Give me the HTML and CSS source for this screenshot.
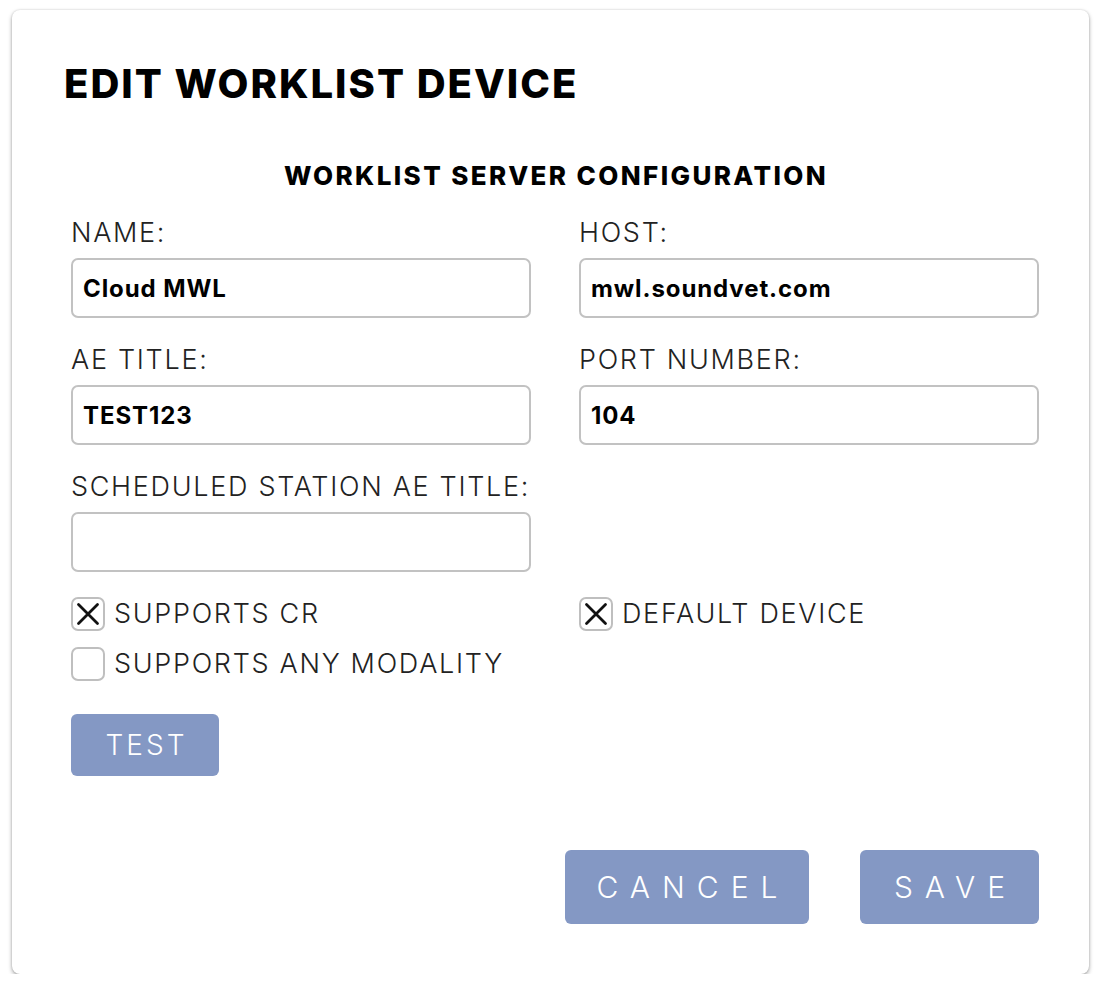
FILE: index.html
```html
<!DOCTYPE html>
<html lang="en">
<head>
<meta charset="utf-8">
<title>Edit Worklist Device</title>
<link rel="stylesheet" href="styles.css">
</head>
<body>
<div class="card">
  <h1 class="title">EDIT WORKLIST DEVICE</h1>
  <h2 class="section">WORKLIST SERVER CONFIGURATION</h2>
  <div class="grid">
    <div class="field">
      <label class="label">NAME:</label>
      <div class="input">Cloud MWL</div>
    </div>
    <div class="field">
      <label class="label">HOST:</label>
      <div class="input">mwl.soundvet.com</div>
    </div>
    <div class="field">
      <label class="label">AE TITLE:</label>
      <div class="input">TEST123</div>
    </div>
    <div class="field">
      <label class="label">PORT NUMBER:</label>
      <div class="input">104</div>
    </div>
    <div class="field">
      <label class="label">SCHEDULED STATION AE TITLE:</label>
      <div class="input"></div>
    </div>
    <div class="field"></div>
  </div>
  <div class="checks">
    <div class="check">
      <span class="box"><svg viewBox="0 0 34 34" width="34" height="34"><path d="M7.5 7.5 L26.5 26.5 M26.5 7.5 L7.5 26.5" stroke="#111" stroke-width="2.8" stroke-linecap="round" fill="none"/></svg></span>
      <span class="check-label">SUPPORTS CR</span>
    </div>
    <div class="check">
      <span class="box"><svg viewBox="0 0 34 34" width="34" height="34"><path d="M7.5 7.5 L26.5 26.5 M26.5 7.5 L7.5 26.5" stroke="#111" stroke-width="2.8" stroke-linecap="round" fill="none"/></svg></span>
      <span class="check-label">DEFAULT DEVICE</span>
    </div>
    <div class="check">
      <span class="box"></span>
      <span class="check-label">SUPPORTS ANY MODALITY</span>
    </div>
  </div>
  <button class="btn btn-test">TEST</button>
  <div class="actions">
    <button class="btn btn-wide btn-cancel">CANCEL</button>
    <button class="btn btn-wide btn-save">SAVE</button>
  </div>
</div>
</body>
</html>
```

FILE: styles.css
```css
* { box-sizing: border-box; }
html, body { margin: 0; padding: 0; background: #ffffff; }
body {
  font-family: "Inter", "Liberation Sans", sans-serif;
  color: #1a1a1a;
}
.card {
  margin: 10px 0 0 12px;
  width: 1077px;
  height: 964px;
  background: #fff;
  border-radius: 8px;
  box-shadow: 0 2px 4px rgba(0,0,0,0.35), 0 0 2px rgba(0,0,0,0.15);
  padding: 50px 50px 0 59px;
  display: flex;
  flex-direction: column;
}
.title {
  margin: 0 0 0 -7px;
  font-size: 40px;
  line-height: 48px;
  font-weight: 800;
  letter-spacing: 2px;
  color: #000;
}
.section {
  margin: 52px 0 0 2px;
  text-align: center;
  font-size: 26px;
  line-height: 32px;
  font-weight: 800;
  letter-spacing: 2.4px;
  color: #000;
}
.grid {
  margin-top: 25px;
  display: grid;
  grid-template-columns: 460px 460px;
  column-gap: 48px;
  row-gap: 26px;
}
.field { display: flex; flex-direction: column; }
.label {
  font-size: 27px;
  line-height: 32px;
  font-weight: 300;
  letter-spacing: 1.7px;
  color: #222;
  margin-bottom: 9px;
}
.input {
  height: 60px;
  flex: none;
  border: 2px solid #c2c2c2;
  border-radius: 7px;
  padding: 0 10px;
  display: flex;
  align-items: center;
  font-size: 24px;
  font-weight: 700;
  letter-spacing: 0.9px;
  color: #000;
}
.checks {
  margin-top: 25px;
  display: grid;
  grid-template-columns: 460px 460px;
  column-gap: 48px;
  row-gap: 16px;
}
.check { display: flex; align-items: center; gap: 9px; }
.box {
  width: 34px;
  height: 34px;
  border: 2px solid #bfbfbf;
  border-radius: 7px;
  display: flex;
  align-items: center;
  justify-content: center;
  flex: none;
}
.box svg { display: block; margin: -2px; }
.check-label {
  font-size: 27px;
  line-height: 32px;
  font-weight: 300;
  letter-spacing: 1.7px;
  color: #222;
}
.btn {
  font-family: "Inter", "Liberation Sans", sans-serif;
  background: #8498c4;
  color: #fff;
  border: none;
  border-radius: 6px;
  font-weight: 300;
  cursor: pointer;
}
.btn-test {
  margin-top: 33px;
  align-self: flex-start;
  width: 148px;
  height: 62px;
  font-size: 28px;
  letter-spacing: 3px;
  padding: 0 0 0 3px;
}
.actions {
  margin-top: 74px;
  display: flex;
  justify-content: flex-end;
  gap: 51px;
}
.btn-wide {
  height: 74px;
  font-size: 30px;
  letter-spacing: 12px;
  padding: 0 0 0 12px;
}
.btn-cancel { width: 244px; }
.btn-save { width: 179px; }
```
